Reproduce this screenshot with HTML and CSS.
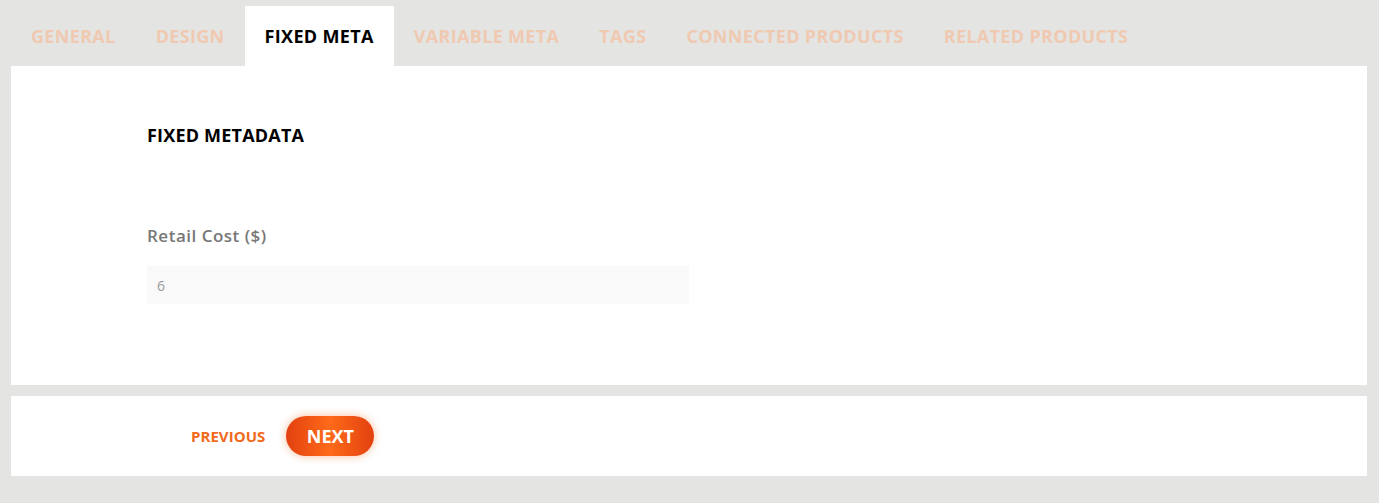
FILE: index.html
```html
<!DOCTYPE html>
<html lang="en">
<head>
  <meta charset="UTF-8" />
  <title>Product Meta</title>
  <link rel="stylesheet" href="styles.css">
</head>
<body>

  <!-- Tabs -->
  <nav class="tabs">
    <a class="tab">GENERAL</a>
    <a class="tab">DESIGN</a>
    <a class="tab active">FIXED META</a>
    <a class="tab">VARIABLE META</a>
    <a class="tab">TAGS</a>
    <a class="tab">CONNECTED PRODUCTS</a>
    <a class="tab">RELATED PRODUCTS</a>
  </nav>

  <!-- Fixed meta panel -->
  <section class="panel">
    <h2 class="panel-title">FIXED METADATA</h2>
    <label class="field-label" for="retailCost">Retail Cost ($)</label>
    <input type="text" id="retailCost" class="field-input" value="6">
  </section>

  <!-- Navigation -->
  <div class="actions">
    <button class="btn-prev">PREVIOUS</button>
    <button class="btn-next">NEXT</button>
  </div>

</body>
</html>
```

FILE: styles.css
```css
body {
  font-family: 'Open Sans', sans-serif;
  margin: 0;
  padding: 6px 12px 27px 11px;
  background: #e4e4e3;
}

.tabs {
  display: flex;
  height: 60px;
}

.tab {
  display: flex;
  align-items: center;
  padding: 0 20px;
  font-size: 18px;
  font-weight: 700;
  color: #f0c9b1;
  letter-spacing: 0.33px;
  cursor: pointer;
}

.tab.active {
  background: white;
  color: #000;
}

.panel {
  background: white;
  height: 319px;
  box-sizing: border-box;
  padding: 57px 136px 0;
}

.panel-title {
  margin: 0;
  font-size: 18px;
  font-weight: 700;
  color: #000;
  letter-spacing: 0.2px;
}

.field-label {
  display: block;
  margin-top: 77px;
  font-size: 17px;
  font-weight: 600;
  color: #777;
  letter-spacing: 0.5px;
}

.field-input {
  display: block;
  width: 542px;
  height: 38px;
  box-sizing: border-box;
  margin-top: 19px;
  padding: 0 10px;
  border: none;
  background: #f9f9f9;
  font-family: 'Open Sans', sans-serif;
  font-size: 14px;
  color: #999;
}

.actions {
  display: flex;
  align-items: center;
  gap: 21px;
  background: white;
  height: 80px;
  margin-top: 11px;
  padding-left: 180px;
}

.btn-prev {
  background: none;
  border: none;
  padding: 0;
  font-family: 'Open Sans', sans-serif;
  font-size: 15px;
  font-weight: 700;
  color: #f26a1b;
  letter-spacing: 0.05px;
  cursor: pointer;
}

.btn-next {
  width: 88px;
  height: 40px;
  border: none;
  border-radius: 20px;
  background: linear-gradient(90deg, #e2410f, #fe6a1a 50%, #e2410f);
  box-shadow: 0 0 8px rgba(242, 106, 27, 0.45);
  font-family: 'Open Sans', sans-serif;
  font-size: 18px;
  font-weight: 700;
  color: white;
  cursor: pointer;
}
```
